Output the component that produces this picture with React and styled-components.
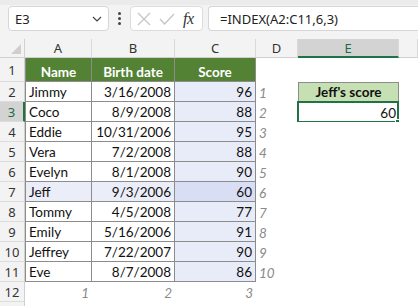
import React from "react";
import styled, { createGlobalStyle } from "styled-components";

const GlobalStyle = createGlobalStyle`
  html, body {
    margin: 0;
    padding: 0;
    background: #ffffff;
    overflow: hidden;
  }
`;

const Page = styled.div`
  width: 418px;
  height: 306px;
  overflow: hidden;
  background: #ffffff;
  font-family: "Lato", "Liberation Sans", sans-serif;
`;

const Toolbar = styled.div`
  height: 39px;
  box-sizing: border-box;
  padding: 1px 0 0 8px;
  background: #f3f3f3;
  border-top: 5px solid #ebebeb;
  display: flex;
  align-items: flex-start;
`;

const NameBox = styled.div`
  width: 101px;
  height: 25px;
  box-sizing: border-box;
  background: #ffffff;
  border: 1px solid #d6d6d6;
  border-radius: 4px;
  display: flex;
  align-items: center;
  justify-content: space-between;
  padding: 0 6px;
  font-family: "Noto Sans", sans-serif;
  font-size: 13px;
  color: #222;
`;

const Dots = styled.div`
  width: 21px;
  height: 25px;
  display: flex;
  flex-direction: column;
  align-items: center;
  justify-content: center;
  gap: 2px;
  span {
    width: 3px;
    height: 3px;
    border-radius: 50%;
    background: #444;
  }
`;

const IconBox = styled.div`
  width: 73px;
  height: 25px;
  box-sizing: border-box;
  background: #ffffff;
  border: 1px solid #dcdcdc;
  border-radius: 4px;
  display: flex;
  align-items: center;
  padding-left: 6px;
  gap: 8px;
`;

const Fx = styled.span`
  font-family: "Liberation Serif", serif;
  font-style: italic;
  font-size: 16px;
  color: #333;
  letter-spacing: -0.5px;
`;

const FormulaBox = styled.div`
  flex: 1;
  margin-left: 5px;
  height: 25px;
  box-sizing: border-box;
  background: #ffffff;
  border: 1px solid #d6d6d6;
  border-right: none;
  border-radius: 4px 0 0 4px;
  display: flex;
  align-items: center;
  padding-left: 11px;
  font-family: "Noto Sans", sans-serif;
  font-size: 13px;
  color: #222;
`;

const Sheet = styled.div`
  display: grid;
  grid-template-columns: 25px 67px 83px 81px 42px 101px 1fr;
  grid-template-rows: 19px 24px repeat(12, 20px);
`;

const ColHead = styled.div`
  box-sizing: border-box;
  background: ${(p) => (p.$active ? "#d3d3d3" : "#f3f3f3")};
  border-right: 1px solid #d9d9d9;
  border-bottom: ${(p) => (p.$active ? "2px solid #217346" : "1px solid #d0d0d0")};
  color: ${(p) => (p.$active ? "#1d6b41" : "#333")};
  font-family: "Noto Sans", sans-serif;
  font-size: 13px;
  display: flex;
  align-items: center;
  justify-content: center;
`;

const RowHead = styled.div`
  box-sizing: border-box;
  background: ${(p) => (p.$active ? "#d3d3d3" : "#f3f3f3")};
  border-bottom: 1px solid #dcdcdc;
  border-right: ${(p) => (p.$active ? "2px solid #217346" : "1px solid #d0d0d0")};
  color: ${(p) => (p.$active ? "#1d6b41" : "#333")};
  font-family: "Noto Sans", sans-serif;
  font-size: 13px;
  display: flex;
  align-items: center;
  justify-content: center;
`;

const Cell = styled.div`
  box-sizing: border-box;
  position: relative;
  background: ${(p) => p.$bg || "#ffffff"};
  border-right: ${(p) => (p.$grid ? "1px solid #8c8c8c" : "none")};
  border-bottom: ${(p) => (p.$grid ? "1px solid #8c8c8c" : "none")};
  border-left: ${(p) => (p.$left ? "1px solid #8c8c8c" : "none")};
  border-top: ${(p) => (p.$top ? "1px solid #8c8c8c" : "none")};
  color: ${(p) => p.$color || "#111"};
  font-weight: ${(p) => (p.$bold ? 700 : 400)};
  font-style: ${(p) => (p.$italic ? "italic" : "normal")};
  font-size: 13.5px;
  display: flex;
  align-items: flex-end;
  justify-content: ${(p) =>
    p.$align === "right" ? "flex-end" : p.$align === "center" ? "center" : "flex-start"};
  padding: 0 3px 1px 3px;
  white-space: nowrap;
`;

const Selection = styled.div`
  position: absolute;
  left: -1px;
  top: -1px;
  right: 0;
  bottom: -1px;
  border: 2px solid #217346;
  pointer-events: none;
  &::after {
    content: "";
    position: absolute;
    right: -5px;
    bottom: -5px;
    width: 5px;
    height: 5px;
    background: #217346;
    border: 1px solid #ffffff;
  }
`;

const Corner = styled.div`
  box-sizing: border-box;
  background: #f3f3f3;
  border-right: 1px solid #d0d0d0;
  border-bottom: 1px solid #d0d0d0;
  display: flex;
  align-items: flex-end;
  justify-content: flex-end;
  padding: 0 3px 3px 0;
`;

const people = [
  ["Jimmy", "3/16/2008", 96],
  ["Coco", "8/9/2008", 88],
  ["Eddie", "10/31/2006", 95],
  ["Vera", "7/2/2008", 88],
  ["Evelyn", "8/1/2008", 90],
  ["Jeff", "9/3/2006", 60],
  ["Tommy", "4/5/2008", 77],
  ["Emily", "5/16/2006", 91],
  ["Jeffrey", "7/22/2007", 90],
  ["Eve", "8/7/2008", 86],
];

const GREEN = "#548235";
const SCORE_BG = "#e8ebf8";
const ROW_HI = "#ebedf8";
const SCORE_HI = "#d9def5";
const HINT = "#8a8a8a";

const App = () => {
  const rows = [];

  rows.push(
    <React.Fragment key="r1">
      <RowHead>1</RowHead>
      <Cell $grid $left $bg={GREEN} $color="#fff" $bold $align="center">Name</Cell>
      <Cell $grid $bg={GREEN} $color="#fff" $bold $align="center">Birth date</Cell>
      <Cell $grid $bg={GREEN} $color="#fff" $bold $align="center">Score</Cell>
      <Cell />
      <Cell />
      <Cell />
    </React.Fragment>
  );

  people.forEach(([name, date, score], i) => {
    const r = i + 2;
    const isJeff = name === "Jeff";
    rows.push(
      <React.Fragment key={name}>
        <RowHead $active={r === 3}>{r}</RowHead>
        <Cell $grid $left $bg={isJeff ? ROW_HI : undefined}>{name}</Cell>
        <Cell $grid $align="right" $bg={isJeff ? ROW_HI : undefined}>{date}</Cell>
        <Cell $grid $align="right" $bg={isJeff ? SCORE_HI : SCORE_BG}>{score}</Cell>
        <Cell $italic $color={HINT}>{i + 1}</Cell>
        {r === 2 && (
          <Cell $grid $left $top $bg="#c6e0b4" $bold $align="center">Jeff's score</Cell>
        )}
        {r === 3 && (
          <Cell $align="right">
            60
            <Selection />
          </Cell>
        )}
        {r > 3 && <Cell />}
        <Cell />
      </React.Fragment>
    );
  });

  rows.push(
    <React.Fragment key="r12">
      <RowHead>12</RowHead>
      <Cell $italic $color={HINT} $align="right">1</Cell>
      <Cell $italic $color={HINT} $align="right">2</Cell>
      <Cell $italic $color={HINT} $align="right">3</Cell>
      <Cell />
      <Cell />
      <Cell />
    </React.Fragment>
  );

  rows.push(
    <React.Fragment key="r13">
      <RowHead />
      <Cell />
      <Cell />
      <Cell />
      <Cell />
      <Cell />
      <Cell />
    </React.Fragment>
  );

  return (
    <Page>
      <GlobalStyle />
      <Toolbar>
        <NameBox>
          <span>E3</span>
          <svg width="10" height="6" viewBox="0 0 10 6">
            <path d="M1 1 L5 5 L9 1" fill="none" stroke="#444" strokeWidth="1.2" />
          </svg>
        </NameBox>
        <Dots>
          <span />
          <span />
          <span />
        </Dots>
        <IconBox>
          <svg width="14" height="14" viewBox="0 0 14 14">
            <path d="M1 1 L13 13 M13 1 L1 13" stroke="#c4c4c4" strokeWidth="1.2" fill="none" />
          </svg>
          <svg width="16" height="12" viewBox="0 0 16 12">
            <path d="M1 6 L5.5 11 L15 1" stroke="#c4c4c4" strokeWidth="1.2" fill="none" />
          </svg>
          <Fx>fx</Fx>
        </IconBox>
        <FormulaBox>=INDEX(A2:C11,6,3)</FormulaBox>
      </Toolbar>
      <Sheet>
        <Corner>
          <svg width="10" height="10" viewBox="0 0 10 10">
            <polygon points="10,0 10,10 0,10" fill="#cfcfcf" />
          </svg>
        </Corner>
        <ColHead>A</ColHead>
        <ColHead>B</ColHead>
        <ColHead>C</ColHead>
        <ColHead>D</ColHead>
        <ColHead $active>E</ColHead>
        <ColHead />
        {rows}
      </Sheet>
    </Page>
  );
};

export default App;
